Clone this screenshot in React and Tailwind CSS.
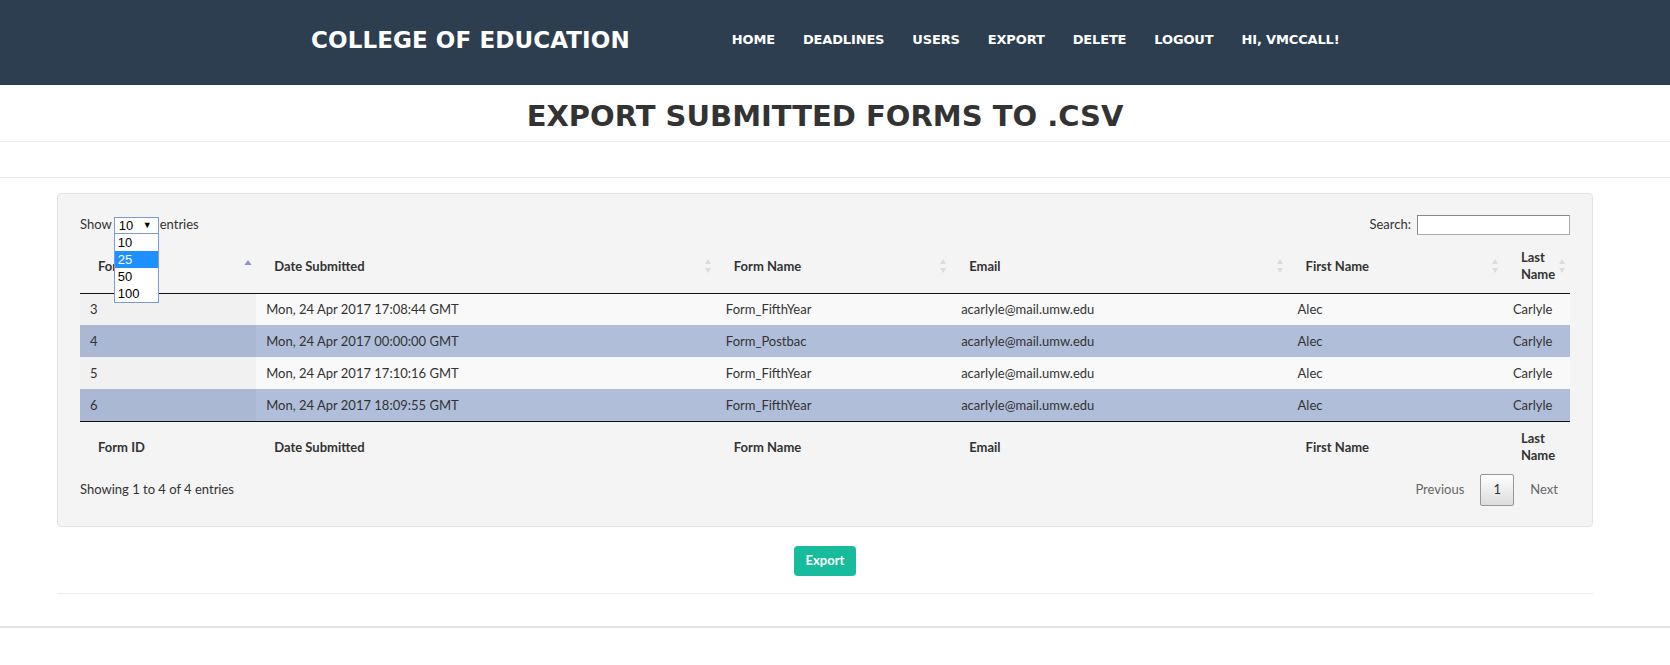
import { useState } from "react";

const navLinks = ["Home", "Deadlines", "Users", "Export", "Delete", "Logout", "Hi, vmccall!"];

const columns = [
  { label: "Form ID", width: "w-[176px]", sort: "asc" },
  { label: "Date Submitted", width: "w-[459px]", sort: "both" },
  { label: "Form Name", width: "w-[235px]", sort: "both" },
  { label: "Email", width: "w-[336px]", sort: "both" },
  { label: "First Name", width: "w-[215px]", sort: "both" },
  { label: "Last Name", width: "w-[67px]", sort: "both" },
];

const rows = [
  ["3", "Mon, 24 Apr 2017 17:08:44 GMT", "Form_FifthYear", "acarlyle@mail.umw.edu", "Alec", "Carlyle"],
  ["4", "Mon, 24 Apr 2017 00:00:00 GMT", "Form_Postbac", "acarlyle@mail.umw.edu", "Alec", "Carlyle"],
  ["5", "Mon, 24 Apr 2017 17:10:16 GMT", "Form_FifthYear", "acarlyle@mail.umw.edu", "Alec", "Carlyle"],
  ["6", "Mon, 24 Apr 2017 18:09:55 GMT", "Form_FifthYear", "acarlyle@mail.umw.edu", "Alec", "Carlyle"],
];

// datatables style sort arrows
function SortIcon({ type }) {
  return (
    <svg
      width="8"
      height="14"
      viewBox="0 0 8 14"
      className="absolute right-[4px] top-1/2 -translate-y-1/2"
    >
      {type === "asc" ? (
        <polygon points="4,1 7.5,6 0.5,6" fill="#8b8fdc" />
      ) : (
        <>
          <polygon points="4,0 7,5 1,5" fill="#dcdcdc" />
          <polygon points="1,9 7,9 4,14" fill="#dcdcdc" />
        </>
      )}
    </svg>
  );
}

function HeadCell({ col, last, showSort }) {
  return (
    <th
      className={`relative text-left align-middle font-bold pl-[18px] leading-[17px] ${
        last ? "pr-[10px]" : "pr-[18px]"
      }`}
    >
      {col.label}
      {showSort && <SortIcon type={col.sort} />}
    </th>
  );
}

function EntriesSelect() {
  const [value] = useState("10");
  return (
    <div className="relative ml-[2px] mr-[1px] font-['Liberation_Sans',sans-serif] text-[13px] text-black">
      <div className="flex h-[17px] w-[45px] items-center justify-between border border-[#7a9bd6] bg-white pl-[4px] pr-[6px] leading-none">
        <span>{value}</span>
        <span className="text-[9px]">▼</span>
      </div>
      {/* open dropdown list */}
      <ul className="absolute left-0 top-[16px] z-10 w-[45px] border border-[#7a9bd6] bg-white leading-[17px]">
        {["10", "25", "50", "100"].map((o) => (
          <li
            key={o}
            className={`h-[17px] pl-[3px] ${o === "25" ? "bg-[#1e90ff] text-white" : ""}`}
          >
            {o}
          </li>
        ))}
      </ul>
    </div>
  );
}

export default function App() {
  return (
    <div className="min-h-screen bg-white font-['Lato',sans-serif] text-[#333]">
      {/* Navbar */}
      <nav className="flex h-[85px] items-center bg-[#2c3e50] pb-[5px] pl-[311px] font-['DejaVu_Sans',sans-serif] font-bold uppercase text-white">
        <a className="text-[23px] tracking-[0.1px]">College of Education</a>
        <ul className="ml-[102px] flex gap-[28px] text-[13px] tracking-[-0.15px]">
          {navLinks.map((l) => (
            <li key={l}>{l}</li>
          ))}
        </ul>
      </nav>

      {/* Page heading */}
      <div className="flex h-[57px] items-center justify-center border-b border-[#eee] pr-[20px] pt-[8px]">
        <h2 className="font-['DejaVu_Sans',sans-serif] text-[29px] font-bold uppercase text-[#333]">
          Export Submitted Forms to .CSV
        </h2>
      </div>
      <div className="h-[36px] border-b border-[#e7e7e7]"></div>

      <div className="w-[1650px] pt-[15px]">
        {/* Table panel */}
        <div className="mx-[57px] rounded-[4px] border border-[#e3e3e3] bg-[#f4f4f4] px-[22px] pb-[20px] pt-[21px] text-[13px]">
          <div className="flex h-[20px] items-center justify-between">
            <div className="flex items-center">
              <span>Show</span>
              <EntriesSelect />
              <span>entries</span>
            </div>
            <label className="flex items-center">
              <span className="mr-[6px]">Search:</span>
              <input className="h-[20px] w-[153px] border border-[#aaa] border-l-[#888] border-t-[#888] bg-white outline-none" />
            </label>
          </div>

          <table className="mt-[5px] w-full table-fixed border-collapse">
            <colgroup>
              {columns.map((c) => (
                <col key={c.label} className={c.width} />
              ))}
            </colgroup>
            <thead>
              <tr className="h-[53px] border-b border-[#111]">
                {columns.map((c, i) => (
                  <HeadCell key={c.label} col={c} last={i === columns.length - 1} showSort />
                ))}
              </tr>
            </thead>
            <tbody>
              {rows.map((r, ri) => {
                const selected = ri % 2 === 1;
                return (
                  <tr
                    key={r[0]}
                    className={`h-[32px] ${selected ? "bg-[#b0bed9]" : "bg-[#f9f9f9]"}`}
                  >
                    {r.map((cell, ci) => (
                      <td
                        key={ci}
                        className={`px-[10px] leading-[16px] ${
                          ci === 0 ? (selected ? "bg-[#aab8d3]" : "bg-[#f1f1f1]") : ""
                        }`}
                      >
                        {cell}
                      </td>
                    ))}
                  </tr>
                );
              })}
            </tbody>
            <tfoot>
              <tr className="h-[52px] border-t border-[#111]">
                {columns.map((c, i) => (
                  <HeadCell key={c.label} col={c} last={i === columns.length - 1} />
                ))}
              </tr>
            </tfoot>
          </table>

          <div className="mt-[1px] flex items-center justify-between">
            <span>Showing 1 to 4 of 4 entries</span>
            <div className="flex items-center text-[#666]">
              <span className="px-[14px]">Previous</span>
              <span className="ml-[2px] flex h-[32px] w-[34px] items-center justify-center rounded-[2px] border border-[#979797] bg-linear-to-b from-white to-[#dcdcdc] text-[#333]">
                1
              </span>
              <span className="ml-[2px] pl-[14px] pr-[12px]">Next</span>
            </div>
          </div>
        </div>

        {/* Export button */}
        <div className="mx-[57px] flex justify-center border-b border-[#eee] pb-[17px] pt-[19px]">
          <button className="h-[30px] w-[62px] rounded-[4px] bg-[#18bc9c] text-[13px] font-bold text-white">
            Export
          </button>
        </div>
      </div>
      <div className="mt-[32px] border-t-2 border-[#e3e3e3]"></div>
    </div>
  );
}
